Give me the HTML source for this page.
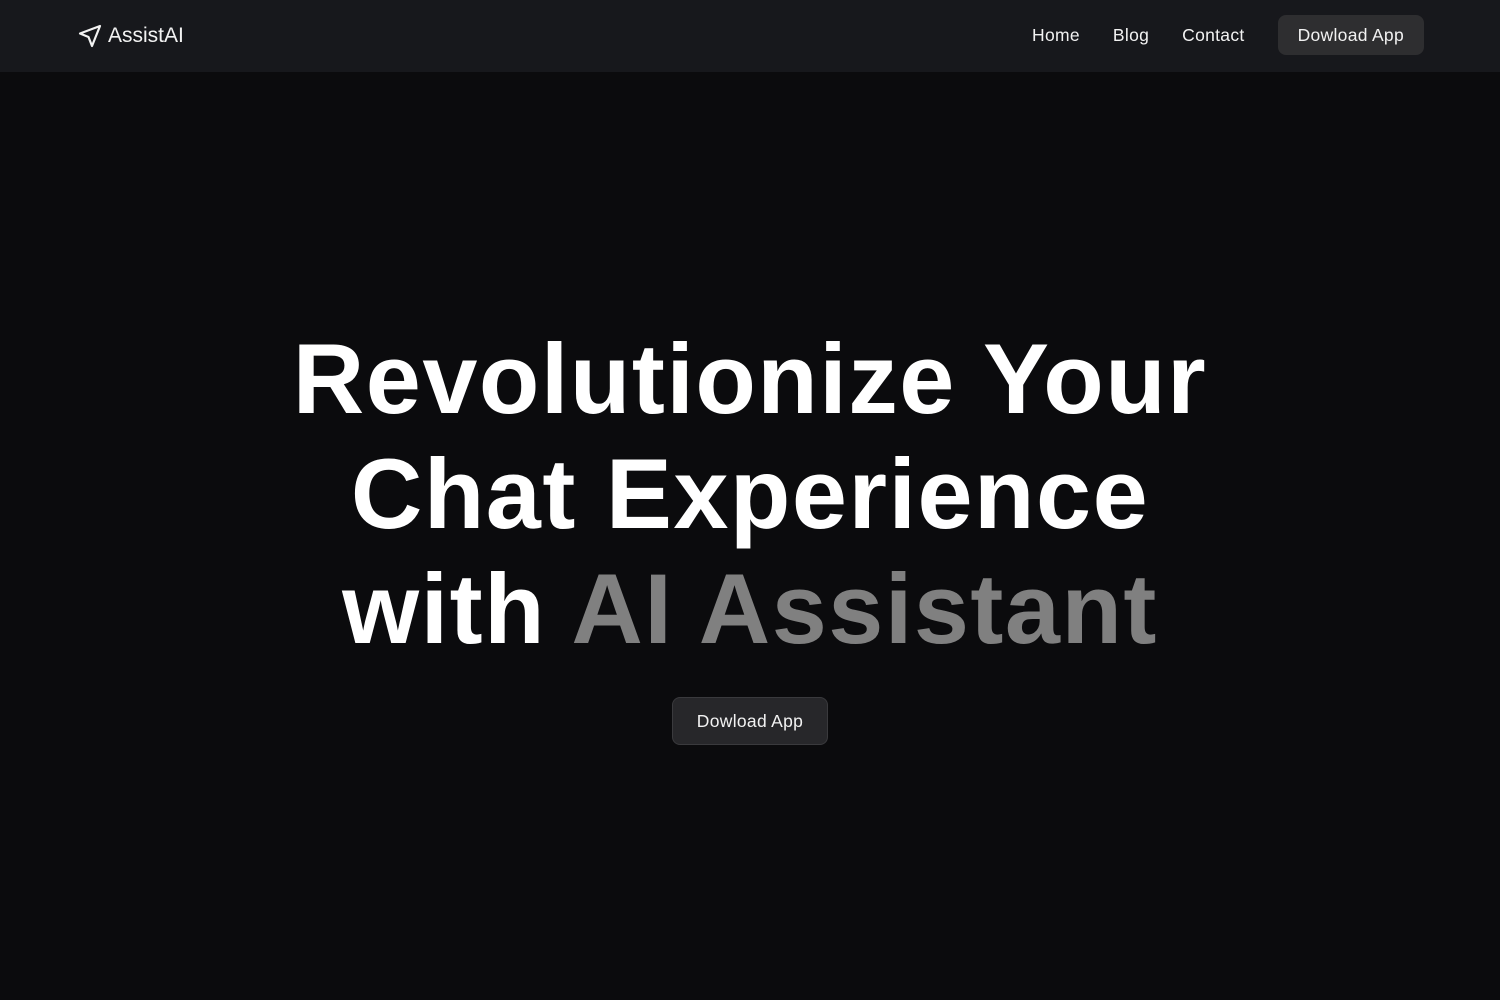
<!DOCTYPE html>
<html><head><meta charset="utf-8"><style>
*{margin:0;padding:0;box-sizing:border-box}
body{width:1500px;height:1000px;background:#0b0b0d;font-family:"Liberation Sans",sans-serif;color:#fff;overflow:hidden}
nav{height:72px;background:#17181c;position:relative}
.logo{position:absolute;left:78px;top:24px;display:flex;align-items:center;gap:6px;font-size:21px;color:#f2f2f2}
.links{position:absolute;right:76px;top:15px;display:flex;align-items:center}
.links a{color:#f2f2f2;text-decoration:none;font-size:17.5px;margin-right:33px;letter-spacing:0.3px}
.btn{background:#2e2e30;border-radius:8px;height:40px;padding:0 20px;display:flex;align-items:center;font-size:17.5px;color:#f2f2f2;letter-spacing:0.3px}
h1{position:absolute;top:321px;left:0;width:1500px;text-align:center;font-size:99px;line-height:115px;font-weight:700;letter-spacing:1.5px}
.g{color:#808080}
.hb{position:absolute;left:672px;top:697px;width:156px;height:48px;background:#27272a;border:1px solid #3a3a3d;border-radius:8px;display:flex;align-items:center;justify-content:center;font-size:17.5px;color:#f2f2f2;letter-spacing:0.3px}
</style></head><body>
<nav>
<div class="logo"><svg width="24" height="24" viewBox="0 0 24 24" fill="none" stroke="#f2f2f2" stroke-width="2.2" stroke-linejoin="round"><path d="M22 2L2 9.5l8.5 3.5 3.5 9z"/></svg>AssistAI</div>
<div class="links"><a>Home</a><a>Blog</a><a>Contact</a><div class="btn">Dowload App</div></div>
</nav>
<h1>Revolutionize Your<br>Chat Experience<br>with <span class="g">AI Assistant</span></h1>
<div class="hb">Dowload App</div>
</body></html>
